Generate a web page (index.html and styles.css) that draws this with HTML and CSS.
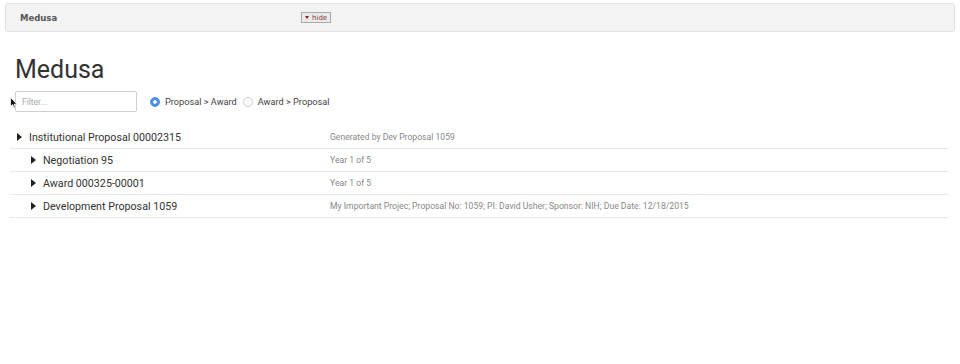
FILE: index.html
```html
<!DOCTYPE html>
<html lang="en">
<head>
  <meta charset="UTF-8"/>
  <title>Medusa</title>
  <link rel="stylesheet" href="styles.css">
</head>
<body>

  <!-- Portlet header -->
  <div class="portlet-head">
    <span class="portlet-title">Medusa</span>
    <button class="hide-btn"><span class="tri-down"></span>hide</button>
  </div>

  <div class="container">
    <h1>Medusa</h1>

    <div class="controls">
      <input type="text" class="filter" placeholder="Filter..." />
      <label class="radio"><span class="dot checked"></span>Proposal &gt; Award</label>
      <label class="radio"><span class="dot"></span>Award &gt; Proposal</label>
    </div>

    <div class="tree">
      <div class="row">
        <div class="name"><span class="tri"></span>Institutional Proposal 00002315</div>
        <div class="desc">Generated by Dev Proposal 1059</div>
      </div>
      <div class="row child">
        <div class="name"><span class="tri"></span>Negotiation 95</div>
        <div class="desc">Year 1 of 5</div>
      </div>
      <div class="row child">
        <div class="name"><span class="tri"></span>Award 000325-00001</div>
        <div class="desc">Year 1 of 5</div>
      </div>
      <div class="row child">
        <div class="name"><span class="tri"></span>Development Proposal 1059</div>
        <div class="desc">My Important Projec; Proposal No: 1059; PI: David Usher; Sponsor: NIH; Due Date: 12/18/2015</div>
      </div>
    </div>
  </div>

  <!-- mouse pointer -->
  <svg class="cursor" width="8" height="12" viewBox="0 0 8 12">
    <path d="M0.5 0.5 L0.5 9.5 L2.6 7.6 L4 11 L5.4 10.4 L4 7.2 L7 7.2 Z" fill="#111" stroke="#fff" stroke-width="0.8"/>
  </svg>

</body>
</html>
```

FILE: styles.css
```css
* { box-sizing: border-box; margin: 0; padding: 0; }
body { font-family: Roboto, "Liberation Sans", sans-serif; color: #333; background: #fff; position: relative; }

.portlet-head {
  margin: 3px 5px 0;
  height: 29px;
  background: #f3f3f3;
  border: 1px solid #e2e2e2;
  border-radius: 3px;
  display: flex;
  align-items: center;
  padding-left: 14px;
}

.portlet-title {
  font-family: "DejaVu Sans", Verdana, sans-serif;
  font-size: 8.5px;
  font-weight: bold;
  color: #555;
  width: 281px;
}

.hide-btn {
  font-family: "DejaVu Sans", Verdana, sans-serif;
  font-size: 7px;
  color: #8a3b3b;
  background: #eaeaea;
  border: 1px solid #aaa;
  height: 11px;
  padding: 0 3px 0 3px;
  display: flex;
  align-items: center;
  gap: 3px;
}

.tri-down {
  border-left: 2.5px solid transparent;
  border-right: 2.5px solid transparent;
  border-top: 3px solid #8a1c1c;
}

.container {
  padding: 0 12px 0 10px;
}

h1 {
  font-weight: 400;
  font-size: 25px;
  color: #333;
  margin: 22px 0 0 5px;
  line-height: 32px;
}

.controls {
  display: flex;
  align-items: center;
  margin: 5px 0 0 5px;
}

.filter {
  width: 122px;
  height: 21px;
  border: 1px solid #cfcfcf;
  border-radius: 2px;
  padding: 0 6px;
  font-family: Roboto, sans-serif;
  font-size: 8.5px;
  margin-right: 13px;
}

.filter::placeholder { color: #aaa; }

.radio {
  display: flex;
  align-items: center;
  font-size: 9.2px;
  color: #444;
  margin-right: 6px;
}

.dot {
  width: 10px;
  height: 10px;
  border-radius: 50%;
  border: 1px solid #ccc;
  margin-right: 5px;
  background: #fff;
}

.dot.checked {
  border-color: #4a90e2;
  background: radial-gradient(circle, #fff 0 1.5px, #4a90e2 2px);
}

.tree {
  margin-top: 14px;
}

.row {
  display: flex;
  align-items: center;
  height: 23px;
  border-bottom: 1.5px solid #e8e8e8;
}

.name {
  display: flex;
  align-items: center;
  width: 320px;
  font-size: 10.7px;
  color: #333;
  padding-left: 7px;
}

.row.child .name { padding-left: 21px; }

.tri {
  border-top: 4px solid transparent;
  border-bottom: 4px solid transparent;
  border-left: 5px solid #222;
  margin-right: 7px;
}

.desc {
  font-size: 8.65px;
  color: #888;
}

.cursor {
  position: absolute;
  left: 10px;
  top: 97px;
}
```
